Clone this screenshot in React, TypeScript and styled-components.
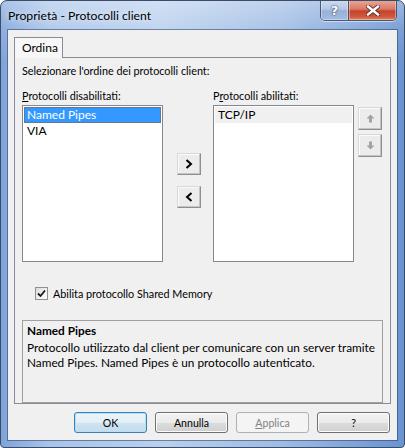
import styled, { createGlobalStyle } from "styled-components";

const font = `Lato, "Noto Sans", "Liberation Sans", sans-serif`;

const GlobalStyle = createGlobalStyle`
  html, body {
    margin: 0;
    padding: 0;
  }
  body {
    width: 405px;
    height: 448px;
    overflow: hidden;
    background: #ffffff;
    font-family: ${font};
    font-size: 11px;
    color: #000;
  }
`;

const Window = styled.div`
  width: 405px;
  height: 448px;
  box-sizing: border-box;
  display: flex;
  flex-direction: column;
  border: 1px solid #3a4d68;
  border-radius: 7px 7px 4px 4px;
  overflow: hidden;
  background:
    linear-gradient(180deg, rgba(255, 255, 255, 0.35) 0px, rgba(255, 255, 255, 0.12) 28px, rgba(255, 255, 255, 0) 60px),
    linear-gradient(90deg, #7fa3d9 0%, #a9c4e9 12%, #b9d0ed 40%, #9ebbe4 70%, #6a93d0 100%);
`;

const TitleBar = styled.div`
  height: 29px;
  flex: none;
  display: flex;
  align-items: flex-start;
  padding: 0 7px;
`;

const Title = styled.div`
  line-height: 29px;
  font-size: 12.2px;
  color: #000;
  text-shadow: 0 0 6px rgba(255, 255, 255, 0.9);
`;

const Caption = styled.div`
  margin-left: auto;
  margin-top: -1px;
  display: flex;
  height: 20px;
  border: 1px solid #44597a;
  border-top: none;
  border-radius: 0 0 5px 5px;
  overflow: hidden;
  box-shadow: 0 1px 0 rgba(255, 255, 255, 0.5);
`;

const CaptionButton = styled.div<{ $close?: boolean }>`
  width: ${(p) => (p.$close ? 47 : 27)}px;
  display: flex;
  align-items: center;
  justify-content: center;
  background: ${(p) =>
    p.$close
      ? "linear-gradient(180deg, #e9a99b 0%, #d97a66 45%, #c4432b 55%, #d05a3f 85%, #e08a64 100%)"
      : "linear-gradient(180deg, #cfdcef 0%, #b5c8e6 45%, #97b0d7 55%, #a4bde2 100%)"};
  border-left: ${(p) => (p.$close ? "1px solid #5b4a5a" : "none")};
  box-shadow: inset 0 0 0 1px rgba(255, 255, 255, 0.35);
`;

const HelpGlyph = styled.span`
  font-family: "DejaVu Sans", sans-serif;
  font-weight: bold;
  font-size: 13px;
  color: #ffffff;
  text-shadow: 0 0 1px #2e4260, 0 0 2px #2e4260;
  line-height: 1;
`;

const Client = styled.div`
  flex: 1;
  margin: 0 7px 7px;
  background: #f0f0f0;
  display: flex;
  flex-direction: column;
  padding: 7px 6px 7px 6px;
  box-shadow: 0 0 0 1px rgba(40, 62, 100, 0.55);
`;

const TabStrip = styled.div`
  display: flex;
  height: 20px;
`;

const Tab = styled.div`
  position: relative;
  z-index: 1;
  height: 21px;
  box-sizing: border-box;
  padding: 0 6px 0 7px;
  width: 49px;
  border: 1px solid #898c95;
  border-bottom: none;
  background: #f7f7f7;
  line-height: 20px;
  font-size: 12px;
`;

const TabPanel = styled.div`
  height: 347px;
  box-sizing: border-box;
  border: 1px solid #898c95;
  background: #f0f0f0;
  padding: 5px 7px 0 7px;
  display: flex;
  flex-direction: column;
`;

const Text = styled.div<{ $size?: number }>`
  line-height: 15px;
  font-size: ${(p) => p.$size ?? 10.8}px;
  white-space: nowrap;
`;

const Lists = styled.div`
  margin-top: 10px;
  display: grid;
  grid-template-columns: 141px 50px 141px 28px;
  grid-template-rows: 15px 157px;
  row-gap: 2px;
`;

const ListBox = styled.div`
  box-sizing: border-box;
  border: 1px solid #828790;
  background: #ffffff;
  padding: 1px;
`;

const ListItem = styled.div<{ $state?: "focused" | "inactive" }>`
  height: 16px;
  box-sizing: border-box;
  padding-left: 2px;
  line-height: 14px;
  font-size: 12px;
  white-space: nowrap;
  border: 1px solid ${(p) => (p.$state === "focused" ? "#66788e" : "transparent")};
  background: ${(p) =>
    p.$state === "focused" ? "#3399ff" : p.$state === "inactive" ? "#f0f0f0" : "transparent"};
  color: ${(p) => (p.$state === "focused" ? "#ffffff" : "#000000")};
`;

const MoveColumn = styled.div`
  display: flex;
  flex-direction: column;
  gap: 11px;
  padding: 48px 0 0 14px;
`;

const OrderColumn = styled.div`
  display: flex;
  flex-direction: column;
  gap: 4px;
  padding: 2px 0 0 4px;
`;

const SmallButton = styled.div<{ $h?: number }>`
  width: 24px;
  height: ${(p) => p.$h ?? 22}px;
  box-sizing: border-box;
  display: flex;
  align-items: center;
  justify-content: center;
  background: #ececec;
  border: 1px solid #d8d8d8;
  border-right-color: #8f8f8f;
  border-bottom-color: #8f8f8f;
  box-shadow: inset -1px -1px 0 #c4c4c4, inset 1px 1px 0 #fbfbfb;
`;

const CheckRow = styled.div`
  margin: 24px 0 0 13px;
  display: flex;
  align-items: center;
  gap: 5px;
  height: 15px;
`;

const CheckBox = styled.div`
  width: 13px;
  height: 13px;
  box-sizing: border-box;
  border: 1px solid #8e8f8f;
  background: linear-gradient(135deg, #dcdcdc, #ffffff);
  padding: 1px;
  display: flex;
  align-items: center;
  justify-content: center;
`;

const Description = styled.div`
  margin-top: 19px;
  height: 83px;
  box-sizing: border-box;
  border: 1px solid #a0a0a0;
  padding: 2px 4px 0;
`;

const DescTitle = styled(Text)`
  font-weight: bold;
  margin-bottom: 2px;
`;

const ButtonRow = styled.div`
  margin-top: 8px;
  display: flex;
  justify-content: flex-end;
  gap: 8px;
  padding-right: 1px;
`;

const DialogButton = styled.div<{ $variant?: "default" | "disabled" }>`
  width: 73px;
  height: 21px;
  box-sizing: border-box;
  border-radius: 3px;
  display: flex;
  align-items: center;
  justify-content: center;
  font-size: 10.6px;
  border: 1px solid
    ${(p) => (p.$variant === "default" ? "#3c7fb1" : p.$variant === "disabled" ? "#adb2b5" : "#707070")};
  background: ${(p) =>
    p.$variant === "default"
      ? "linear-gradient(180deg, #ecf4f9 0%, #e2eef6 50%, #cfe3f0 50%, #c4dcec 100%)"
      : p.$variant === "disabled"
      ? "#f4f4f4"
      : "linear-gradient(180deg, #f2f2f2 0%, #ebebeb 50%, #dddddd 50%, #cfcfcf 100%)"};
  box-shadow: ${(p) =>
    p.$variant === "disabled" ? "none" : p.$variant === "default" ? "inset 0 0 0 1px #b7e0f7" : "inset 0 0 0 1px #fcfcfc"};
  color: ${(p) => (p.$variant === "disabled" ? "#838383" : "#000")};
`;

const U = styled.span`
  text-decoration: underline;
  text-underline-offset: 1px;
`;

function Chevron({ dir }: { dir: "left" | "right" }) {
  return (
    <svg width="8" height="10" viewBox="0 0 8 10">
      <polyline
        points={dir === "right" ? "1.5,1 6,5 1.5,9" : "6.5,1 2,5 6.5,9"}
        fill="none"
        stroke="#000"
        strokeWidth="2"
      />
    </svg>
  );
}

function OrderArrow({ dir }: { dir: "up" | "down" }) {
  return (
    <svg width="9" height="9" viewBox="0 0 9 9">
      <path
        d="M4.5 0.5 L8.5 4.5 L6 4.5 L6 8.5 L3 8.5 L3 4.5 L0.5 4.5 Z"
        fill="#a3a3a3"
        transform={dir === "down" ? "rotate(180 4.5 4.5)" : undefined}
      />
    </svg>
  );
}

function CloseGlyph() {
  return (
    <svg width="14" height="11" viewBox="0 0 14 11">
      <path d="M2 1.5 L12 9.5 M12 1.5 L2 9.5" stroke="#5e2a22" strokeWidth="4.2" strokeLinecap="square" />
      <path d="M2 1.5 L12 9.5 M12 1.5 L2 9.5" stroke="#ffffff" strokeWidth="2.4" strokeLinecap="square" />
    </svg>
  );
}

function Tick() {
  return (
    <svg width="9" height="9" viewBox="0 0 9 9">
      <path d="M1 4.5 L3.5 7 L8 1.5" fill="none" stroke="#1a1a1a" strokeWidth="1.8" />
    </svg>
  );
}

export default function App() {
  return (
    <>
      <GlobalStyle />
      <Window>
        <TitleBar>
          <Title>Proprietà - Protocolli client</Title>
          <Caption>
            <CaptionButton>
              <HelpGlyph>?</HelpGlyph>
            </CaptionButton>
            <CaptionButton $close>
              <CloseGlyph />
            </CaptionButton>
          </Caption>
        </TitleBar>
        <Client>
          <TabStrip>
            <Tab>Ordina</Tab>
          </TabStrip>
          <TabPanel>
            <Text>Selezionare l'ordine dei protocolli client:</Text>
            <Lists>
              <Text>
                <U>P</U>rotocolli disabilitati:
              </Text>
              <div />
              <Text>
                P<U>r</U>otocolli abilitati:
              </Text>
              <div />
              <ListBox>
                <ListItem $state="focused">Named Pipes</ListItem>
                <ListItem>VIA</ListItem>
              </ListBox>
              <MoveColumn>
                <SmallButton>
                  <Chevron dir="right" />
                </SmallButton>
                <SmallButton>
                  <Chevron dir="left" />
                </SmallButton>
              </MoveColumn>
              <ListBox>
                <ListItem $state="inactive">TCP/IP</ListItem>
              </ListBox>
              <OrderColumn>
                <SmallButton $h={23}>
                  <OrderArrow dir="up" />
                </SmallButton>
                <SmallButton $h={23}>
                  <OrderArrow dir="down" />
                </SmallButton>
              </OrderColumn>
            </Lists>
            <CheckRow>
              <CheckBox>
                <Tick />
              </CheckBox>
              <Text>Abilita protocollo Shared Memory</Text>
            </CheckRow>
            <Description>
              <DescTitle $size={11.8}>Named Pipes</DescTitle>
              <Text $size={11.8}>Protocollo utilizzato dal client per comunicare con un server tramite</Text>
              <Text $size={11.8}>Named Pipes. Named Pipes è un protocollo autenticato.</Text>
            </Description>
          </TabPanel>
          <ButtonRow>
            <DialogButton $variant="default">OK</DialogButton>
            <DialogButton>Annulla</DialogButton>
            <DialogButton $variant="disabled">
              <U>A</U>pplica
            </DialogButton>
            <DialogButton>?</DialogButton>
          </ButtonRow>
        </Client>
      </Window>
    </>
  );
}
